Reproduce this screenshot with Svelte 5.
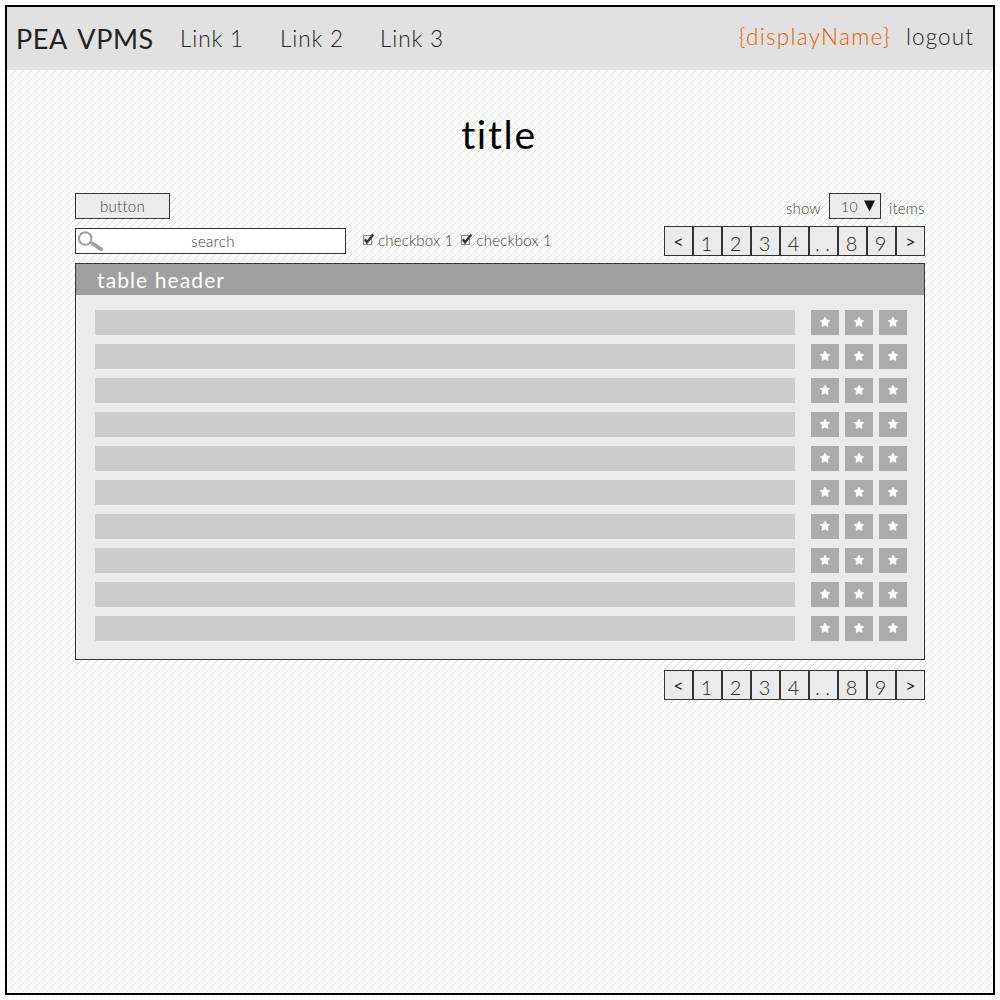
<script>
  const links = ['Link 1', 'Link 2', 'Link 3'];
  const pages = ['<', '1', '2', '3', '4', '. .', '8', '9', '>'];
  const rows = Array.from({ length: 10 }, (_, i) => i);
  const actions = [0, 1, 2];
</script>

{#snippet pager()}
  <nav class="pager">
    {#each pages as page}
      <span class="page" class:arrow={page === '<' || page === '>'}>{page}</span>
    {/each}
  </nav>
{/snippet}

{#snippet checkbox()}
  <span class="check">
    <svg width="13" height="13" viewBox="0 0 13 13">
      <rect x="1.5" y="2.5" width="8" height="9" fill="#f4f4f4" stroke="#888" />
      <path d="M2.8 6.2 5 9.2 11.4 1.5" fill="none" stroke="#383838" stroke-width="2.4" />
    </svg>
    <span>checkbox 1</span>
  </span>
{/snippet}

<div class="frame">
  <header>
    <strong>PEA VPMS</strong>
    <div class="links">
      {#each links as link}<span>{link}</span>{/each}
    </div>
    <span class="user">{'{displayName}'}</span>
    <span class="logout">logout</span>
  </header>
  <main>
    <h1>title</h1>
    <div class="bar top">
      <div class="button">button</div>
      <div class="show">
        <span class="word">show</span>
        <div class="select">
          <span>10</span>
          <svg width="11" height="12" viewBox="0 0 11 12"><path d="M0 0.5H11L5.5 11.5Z" fill="#111" /></svg>
        </div>
        <span class="word items">items</span>
      </div>
    </div>
    <div class="bar filters">
      <div class="search">
        <svg width="26" height="22" viewBox="0 0 26 22" fill="none" stroke="#a0a0a0">
          <circle cx="7.2" cy="7.5" r="6.2" stroke-width="2.1" />
          <path d="M12 11 14 12.5" stroke-width="2.2" />
          <path d="M14.5 12.5 23.3 18.3" stroke-width="3.8" stroke-linecap="round" />
        </svg>
        <span>search</span>
      </div>
      <div class="checks">{@render checkbox()}{@render checkbox()}</div>
      {@render pager()}
    </div>
    <section class="table">
      <h2>table header</h2>
      <div class="rows">
        {#each rows as row (row)}
          <div class="row">
            <div class="content"></div>
            {#each actions as action (action)}
              <div class="action">
                <svg width="12" height="12" viewBox="0 0 12 12">
                  <path d="M6 1.2 7.5 4.2 10.7 4.6 8.4 7 9 10.4 6 8.9 3 10.4 3.6 7 1.3 4.6 4.5 4.2Z" fill="#fff" stroke="#fff" stroke-width=".9" stroke-linejoin="round" />
                </svg>
              </div>
            {/each}
          </div>
        {/each}
      </div>
    </section>
    <div class="bottom">{@render pager()}</div>
  </main>
</div>

<style>
  :global(body) { background: #fff; }
  .frame {
    box-sizing: border-box;
    width: 990px;
    height: 990px;
    margin: 5px;
    border: 2px solid #000;
    overflow: hidden;
    font-family: Lato, 'Open Sans', sans-serif;
    font-weight: 300;
    color: #222;
    background: url("data:image/svg+xml,%3Csvg xmlns='http://www.w3.org/2000/svg' width='8' height='8'%3E%3Cpath d='M7 0h1v1h-1zM6 1h1v1h-1zM5 2h1v1h-1zM4 3h1v1h-1zM3 4h1v1h-1zM2 5h1v1h-1zM1 6h1v1h-1zM0 7h1v1h-1z' fill='%23d6d6d6'/%3E%3C/svg%3E");
  }
  header {
    display: flex;
    height: 63px;
    line-height: 63px;
    background: #e1e1e1;
    padding: 0 19px 0 9px;
    font-size: 22.5px;
    letter-spacing: .9px;
    white-space: nowrap;
  }
  strong { width: 164px; font-size: 27px; font-weight: 400; letter-spacing: .55px; word-spacing: 4px; }
  .links { display: flex; flex: 1; }
  .links span { width: 100px; }
  .user { color: #e66000; margin-right: 15px; letter-spacing: 1.3px; }
  .logout { letter-spacing: 1.1px; }
  .user, .logout { line-height: 60px; }
  main { width: 850px; margin: 0 auto; }
  h1 {
    margin: 0;
    height: 123px;
    line-height: 128px;
    text-align: center;
    font-size: 39px;
    font-weight: 400;
    letter-spacing: 1.7px;
    padding-right: 2px;
    color: #000;
  }
  .bar { display: flex; justify-content: space-between; }
  .top { height: 33px; }
  .button, .select, .search {
    box-sizing: border-box;
    height: 26px;
    border: 1px solid #333;
    background: #ebebeb;
    font-size: 15px;
    line-height: 25px;
    color: #3c3c3c;
    letter-spacing: .3px;
  }
  .button { width: 95px; text-align: center; }
  .show { display: flex; gap: 8px; font-size: 15px; line-height: 30px; color: #3c3c3c; letter-spacing: .15px; }
  .items { width: 36px; }
  .select { width: 52px; display: flex; justify-content: space-between; padding: 0 5px 0 11px; font-size: 14px; }
  .select svg { margin-top: 6px; }
  .search { display: flex; width: 271px; margin-top: 2px; background: #fff; }
  .search svg { margin: 2px 0 0 2px; flex: none; }
  .search span { flex: 1; text-align: center; padding-right: 23px; }
  .checks { display: flex; gap: 7px; flex: 1; margin-left: 16px; font-size: 15px; line-height: 29px; color: #3c3c3c; }
  .check { display: flex; gap: 3px; letter-spacing: .2px; }
  .check svg { margin-top: 7px; }
  .pager { display: grid; grid-template: 28px / 27px repeat(8, 29px); width: 261px; height: 30px; box-sizing: border-box; border: 1px solid #333; background: #ebebeb; }
  .page { padding-right: 2px; text-align: center; font-size: 20px; line-height: 32px; color: #222; white-space: nowrap; }
  .page + .page { border-left: 2px solid #333; }
  .page.arrow { padding-right: 0; font-size: 18px; font-weight: 400; line-height: 29px; }
  .table { height: 397px; box-sizing: border-box; margin-top: 7px; border: 1px solid #333; background: #ebebeb; }
  .filters { height: 30px; }
  h2 { margin: 0; height: 31px; padding-left: 21px; background: #a0a0a0; color: #fff; font-size: 21px; line-height: 32px; font-weight: 400; letter-spacing: 1.1px; }
  .rows { display: grid; gap: 9px; padding: 15px 17px 0 19px; }
  .row { display: flex; gap: 6px; height: 25px; }
  .content { width: 700px; margin-right: 10px; background: #ccc; }
  .action { display: flex; align-items: flex-start; justify-content: center; padding-top: 6px; box-sizing: border-box; width: 28px; background: #ababab; }
  .bottom { display: flex; justify-content: flex-end; margin-top: 10px; }
</style>
